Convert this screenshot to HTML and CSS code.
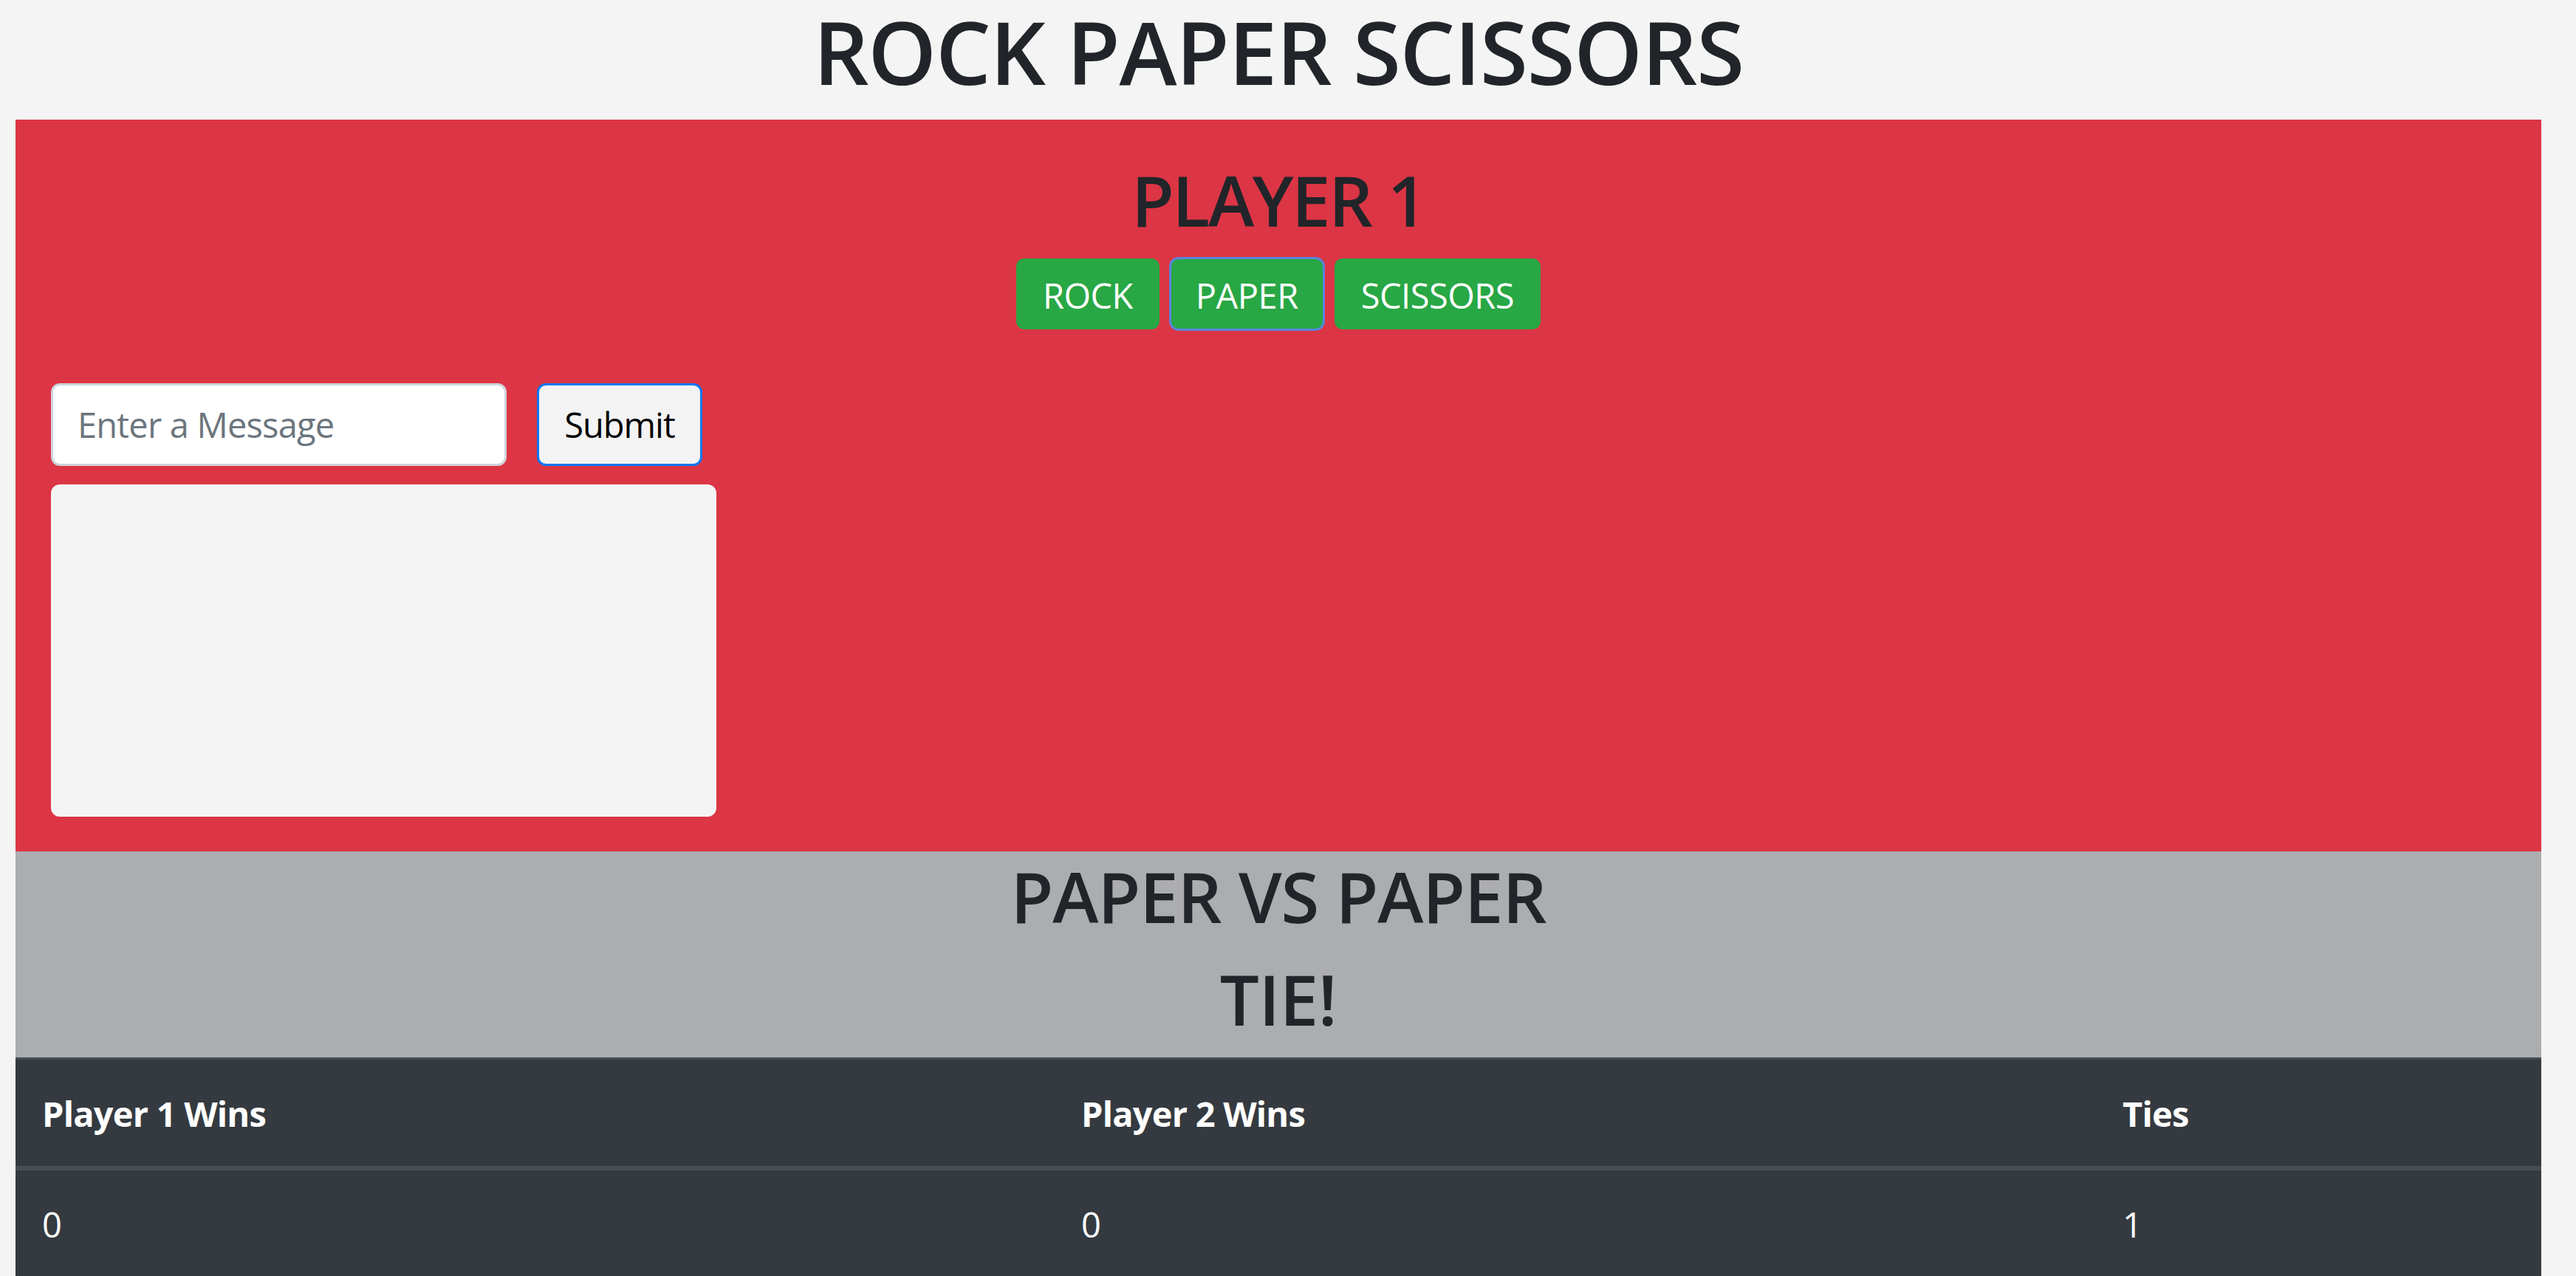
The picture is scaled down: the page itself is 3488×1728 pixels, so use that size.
FILE: index.html
```html
<!DOCTYPE html>
<html lang="en">
<head>
<meta charset="utf-8">
<title>Rock Paper Scissors</title>
<link rel="stylesheet" href="styles.css">
</head>
<body>
<div class="page">
  <h1 class="title">ROCK PAPER SCISSORS</h1>

  <section class="player">
    <h2 class="player-name">PLAYER 1</h2>
    <div class="choices">
      <button class="choice" type="button">ROCK</button>
      <button class="choice is-focused" type="button">PAPER</button>
      <button class="choice" type="button">SCISSORS</button>
    </div>
    <form class="chat-form">
      <input class="msg-input" type="text" placeholder="Enter a Message">
      <button class="submit" type="button">Submit</button>
    </form>
    <div class="chat-log"></div>
  </section>

  <section class="result">
    <h2 class="result-line result-match">PAPER VS PAPER</h2>
    <h2 class="result-line result-outcome">TIE!</h2>
  </section>

  <table class="score">
    <colgroup>
      <col class="col-p1">
      <col class="col-p2">
      <col class="col-ties">
    </colgroup>
    <thead>
      <tr><th>Player 1 Wins</th><th>Player 2 Wins</th><th>Ties</th></tr>
    </thead>
    <tbody>
      <tr><td>0</td><td>0</td><td>1</td></tr>
    </tbody>
  </table>
</div>
</body>
</html>
```
FILE: styles.css
```css
html, body {
  margin: 0;
  padding: 0;
}
body {
  background: #f4f4f4;
  color: #212529;
  font-family: "Open Sans", "Noto Sans", sans-serif;
  overflow: hidden;
}
.page {
  width: 3420px;
  margin-left: 21px;
}
.title {
  margin: 0 0 22px;
  font-size: 118px;
  font-weight: 600;
  line-height: 140px;
  letter-spacing: -1.2px;
  text-align: center;
  color: #212529;
}

/* Player panel */
.player {
  background: #dc3545;
  padding: 52px 48px 47px;
}
.player-name {
  margin: 0 0 21px;
  font-size: 94px;
  font-weight: 600;
  line-height: 115px;
  letter-spacing: -2.4px;
  text-align: center;
  color: #212529;
}
.choices {
  display: flex;
  justify-content: center;
  gap: 15px;
}
.choice {
  font-family: inherit;
  font-size: 47px;
  line-height: 72px;
  letter-spacing: -0.5px;
  padding: 14px 36px 10px;
  border: 0;
  border-radius: 11px;
  background: #28a745;
  color: #fff;
}
.choice.is-focused {
  padding-left: 34px;
  padding-right: 34px;
  outline: 3px solid #5b84dd;
  outline-offset: -1px;
}
.chat-form {
  display: flex;
  gap: 41px;
  margin-top: 73px;
}
.msg-input {
  box-sizing: border-box;
  width: 617px;
  height: 112px;
  padding: 0 33px;
  border: 3px solid #ced4da;
  border-radius: 12px;
  background: #fff;
  font-family: inherit;
  font-size: 47px;
  line-height: 72px;
  letter-spacing: -0.8px;
  color: #495057;
}
.msg-input::placeholder {
  color: #6c757d;
  opacity: 1;
}
.submit {
  box-sizing: border-box;
  width: 224px;
  height: 112px;
  padding: 0;
  border: 3px solid #0b76f2;
  border-radius: 12px;
  background: #f3f3f3;
  font-family: inherit;
  font-size: 47px;
  line-height: 72px;
  letter-spacing: -1px;
  color: #000;
}
.chat-log {
  width: 901px;
  height: 450px;
  margin-top: 25px;
  border-radius: 12px;
  background: #f4f4f4;
}

/* Result */
.result {
  background: #acadaf;
  padding: 4px 0 21px;
}
.result-line {
  margin: 0 0 24px;
  font-size: 94px;
  font-weight: 600;
  line-height: 115px;
  text-align: center;
  color: #212529;
}
.result-match {
  letter-spacing: -1.05px;
}
.result-outcome {
  letter-spacing: -0.4px;
}
.result-line:last-child {
  margin-bottom: 0;
}

/* Score table */
.score {
  width: 100%;
  table-layout: fixed;
  border-collapse: separate;
  border-spacing: 0;
  background: #343a40;
  color: #fff;
}
.col-p1 { width: 1407px; }
.col-p2 { width: 1410px; }
.col-ties { width: 603px; }
.score th,
.score td {
  padding: 37px 36px 35px;
  font-size: 47px;
  line-height: 72px;
  text-align: left;
  vertical-align: top;
}
.score th {
  font-weight: 700;
  letter-spacing: -0.8px;
  border-top: 3px solid #454d55;
  border-bottom: 6px solid #454d55;
}
.score td {
  font-weight: 400;
}
```
